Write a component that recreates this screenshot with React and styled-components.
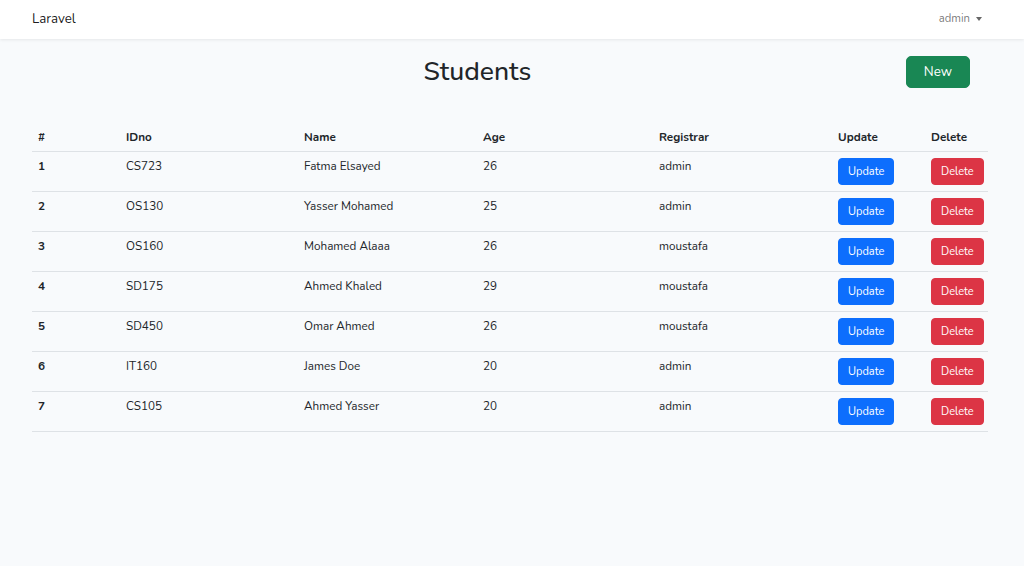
import React from 'react'
import styled, { createGlobalStyle } from 'styled-components'

const GlobalStyle = createGlobalStyle`
  * { box-sizing: border-box; }
  body {
    margin: 0;
    background: #f8fafc;
    color: #212529;
    font-family: "Nunito", "Lato", "Noto Sans", sans-serif;
    font-size: 11.7px;
    line-height: 1.6;
  }
`

const students = [
  { id: 1, idno: 'CS723', name: 'Fatma Elsayed', age: 26, registrar: 'admin' },
  { id: 2, idno: 'OS130', name: 'Yasser Mohamed', age: 25, registrar: 'admin' },
  { id: 3, idno: 'OS160', name: 'Mohamed Alaaa', age: 26, registrar: 'moustafa' },
  { id: 4, idno: 'SD175', name: 'Ahmed Khaled', age: 29, registrar: 'moustafa' },
  { id: 5, idno: 'SD450', name: 'Omar Ahmed', age: 26, registrar: 'moustafa' },
  { id: 6, idno: 'IT160', name: 'James Doe', age: 20, registrar: 'admin' },
  { id: 7, idno: 'CS105', name: 'Ahmed Yasser', age: 20, registrar: 'admin' },
]

const columns = [88, 178, 179, 176, 179, 93, 63]

function App() {
  return (
    <>
      <GlobalStyle />
      <Navbar>
        <Brand>Laravel</Brand>
        <UserMenu>admin <Caret /></UserMenu>
      </Navbar>

      <Main>
        <Header>
          <Title>Students</Title>
          <Button variant="success" size="md">New</Button>
        </Header>

        <Table>
          <colgroup>
            {columns.map((w, i) => <col key={i} style={{ width: w }} />)}
          </colgroup>
          <thead>
            <tr>
              <Th>#</Th>
              <Th>IDno</Th>
              <Th>Name</Th>
              <Th>Age</Th>
              <Th>Registrar</Th>
              <Th>Update</Th>
              <Th>Delete</Th>
            </tr>
          </thead>
          <tbody>
            {students.map(s => (
              <tr key={s.id}>
                <Td bold>{s.id}</Td>
                <Td>{s.idno}</Td>
                <Td>{s.name}</Td>
                <Td>{s.age}</Td>
                <Td>{s.registrar}</Td>
                <Td><Button variant="primary">Update</Button></Td>
                <Td><Button variant="danger">Delete</Button></Td>
              </tr>
            ))}
          </tbody>
        </Table>
      </Main>
    </>
  )
}

export default App

const Navbar = styled.nav`
  height: 39px;
  background: #fff;
  box-shadow: 0 1px 3px rgba(0, 0, 0, 0.08);
  display: flex;
  align-items: center;
  justify-content: space-between;
  padding: 0 42px 0 32px;
`

const Brand = styled.span`
  font-size: 13.3px;
  color: rgba(0, 0, 0, 0.9);
`

const UserMenu = styled.span`
  font-size: 11.3px;
  color: rgba(0, 0, 0, 0.55);
  display: flex;
  align-items: center;
  gap: 6px;
`

const Caret = styled.span`
  width: 0;
  height: 0;
  border-left: 3.5px solid transparent;
  border-right: 3.5px solid transparent;
  border-top: 4px solid rgba(0, 0, 0, 0.6);
  margin-top: -2px;
`

const Main = styled.main`
  padding: 17px 36px 0 32px;
`

const Header = styled.div`
  display: flex;
  align-items: center;
  margin-bottom: 31px;
`

const Title = styled.h2`
  flex: 1;
  margin: 0;
  padding-left: 17px;
  text-align: center;
  font-size: 26.5px;
  font-weight: 500;
  line-height: 1.2;
`

const colors = {
  primary: '#0d6efd',
  success: '#198754',
  danger: '#dc3545',
}

const Button = styled.button`
  font-family: inherit;
  border: 1px solid ${p => colors[p.variant]};
  background: ${p => colors[p.variant]};
  color: #fff;
  cursor: pointer;
  border-radius: ${p => (p.size === 'md' ? '5px' : '4px')};
  font-size: ${p => (p.size === 'md' ? '13.4px' : '11px')};
  line-height: ${p => (p.size === 'md' ? '22px' : '19px')};
  padding: ${p => (p.size === 'md' ? '4px 17px' : '3px 9px')};
  margin-right: ${p => (p.size === 'md' ? '18px' : '0')};
`

const Table = styled.table`
  width: 956px;
  border-collapse: collapse;
  table-layout: fixed;
`

const Th = styled.th`
  text-align: left;
  font-weight: 700;
  padding: 8px 6px 4px;
  line-height: 20px;
  border-bottom: 1px solid #dee2e6;
`

const Td = styled.td`
  vertical-align: top;
  padding: 6px 6px;
  line-height: 17px;
  height: 40px;
  font-weight: ${p => (p.bold ? 700 : 400)};
  border-bottom: 1px solid #dee2e6;
`
